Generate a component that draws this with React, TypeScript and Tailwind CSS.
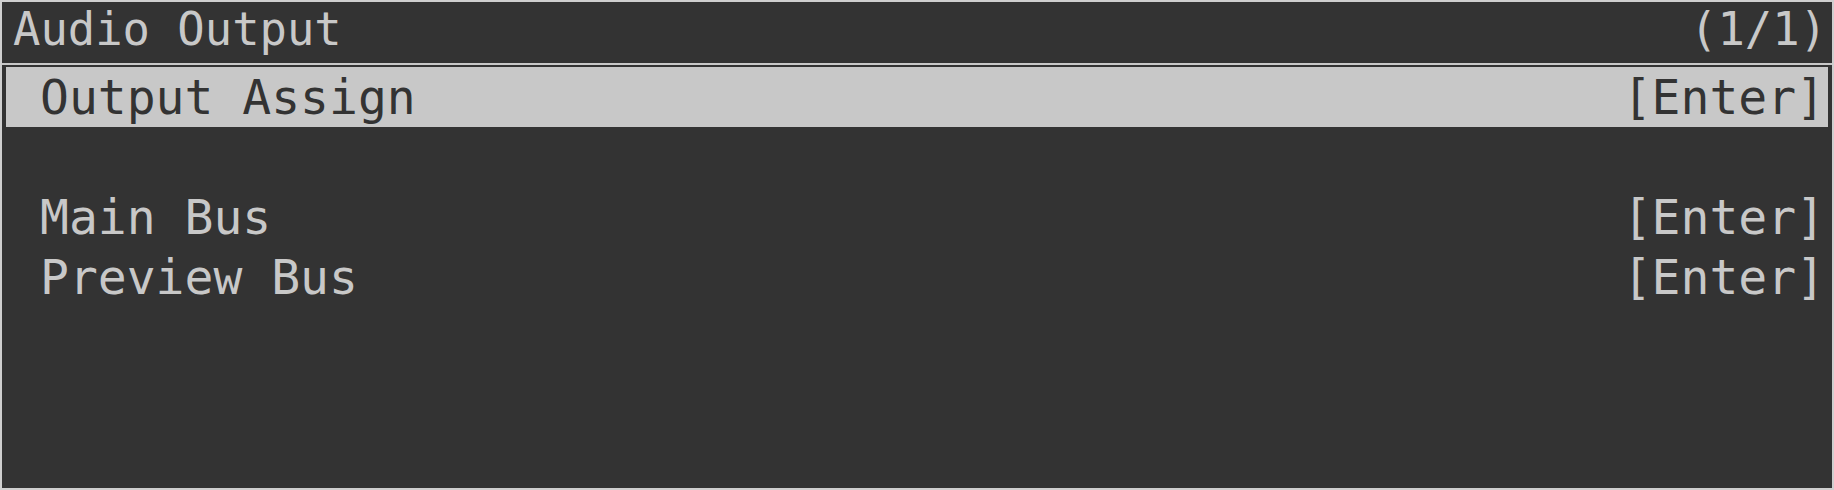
export default function App() {
  const rows: { label: string; action: string; selected?: boolean }[] = [
    { label: "Output Assign", action: "[Enter]", selected: true },
    { label: "", action: "" },
    { label: "Main Bus", action: "[Enter]" },
    { label: "Preview Bus", action: "[Enter]" },
  ];

  return (
    <div
      className="w-[1834px] h-[490px] bg-[#333333] border-2 border-[#cfcfcf] flex flex-col text-[#c8c8c8]"
      style={{ fontFamily: '"DejaVu Sans Mono", "Liberation Mono", monospace' }}
    >
      {/* title bar */}
      <div className="h-[61px] shrink-0 flex justify-between items-start pl-[11px] pr-[5px] text-[45.5px] leading-[56px]">
        <span>Audio Output</span>
        <span>(1/1)</span>
      </div>
      <div className="h-[2px] shrink-0 bg-[#c8c8c8]" />

      {/* menu */}
      <div className="flex flex-col px-[4px] pt-[2px]">
        {rows.map((r, i) => (
          <div
            key={i}
            className={
              "h-[60px] flex justify-between items-start pl-[34px] pr-[3px] text-[48px] leading-[60px] whitespace-pre " +
              (r.selected ? "bg-[#c8c8c8] text-[#333333]" : "")
            }
          >
            <span>{r.label}</span>
            <span>{r.action}</span>
          </div>
        ))}
      </div>
    </div>
  );
}
